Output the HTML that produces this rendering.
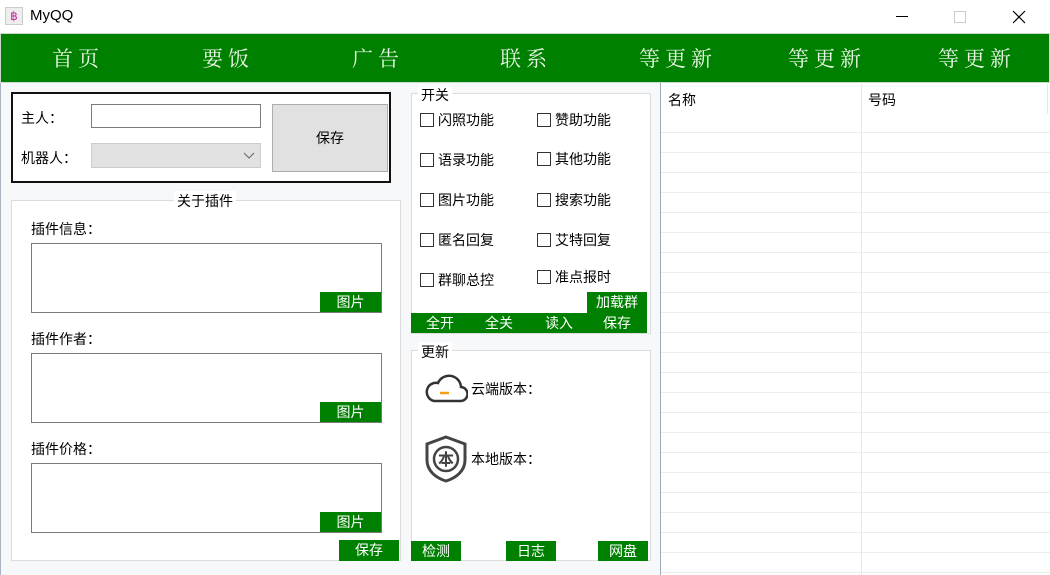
<!DOCTYPE html>
<html><head><meta charset="utf-8"><style>
*{margin:0;padding:0;box-sizing:border-box}
body{width:1050px;height:575px;position:relative;background:#f7f8fa;font-family:"Liberation Sans","Noto Sans CJK SC",sans-serif;font-size:14px;color:#000;overflow:hidden}
.a{position:absolute}
.nav{left:0;top:33px;width:1050px;height:50px;background:#008000;border:1px solid #cfd8cf}
.nav span{position:absolute;top:9px;font-family:"Noto Serif CJK SC",serif;font-size:21px;color:#eef8e8;letter-spacing:5px;transform:translateX(-50%);white-space:nowrap}
.g{background:#008000;color:#fff;font-size:14px;text-align:center;line-height:20px}
.grp{border:1px solid #dcdcdc;background:#fff}
.ta{background:#fff;border:1px solid #7a7a7a}
.cb{position:absolute;font-size:14px;line-height:16px}
.cb i{display:inline-block;width:14px;height:14px;border:1px solid #333;vertical-align:-2px;margin-right:4px;background:#fff}
.lbl{background:#fff;padding:0 3px}
</style></head><body>
<div class="a" style="left:0;top:0;width:1050px;height:33px;background:#fff"></div>
<div class="a" style="left:5px;top:7px;width:18px;height:18px;background:#eee;border:1px solid #ccc;color:#d0209a;font-size:12px;line-height:16px;text-align:center">฿</div>
<div class="a" style="left:30px;top:7px;font-size:15px">MyQQ</div>
<div class="a" style="left:896px;top:16px;width:12px;height:1px;background:#000"></div>
<div class="a" style="left:954px;top:11px;width:12px;height:12px;border:1px solid #ccc"></div>
<svg class="a" style="left:1012px;top:10px" width="14" height="14"><path d="M1 1L13 13M13 1L1 13" stroke="#000" stroke-width="1.2"/></svg>

<div class="a nav">
<span style="left:77px">首页</span><span style="left:227px">要饭</span><span style="left:377px">广告</span><span style="left:525px">联系</span><span style="left:677px">等更新</span><span style="left:826px">等更新</span><span style="left:976px">等更新</span>
</div>

<div class="a" style="left:0;top:83px;width:660px;height:492px;background:#f7f8fa;border-left:1px solid #a9b4c0"></div>

<div class="a" style="left:11px;top:92px;width:380px;height:91px;border:2px solid #111;background:#fff"></div>
<div class="a" style="left:21px;top:108px">主人：</div>
<div class="a" style="left:21px;top:148px">机器人：</div>
<div class="a" style="left:91px;top:104px;width:170px;height:24px;border:1px solid #7a7a7a;background:#fff"></div>
<div class="a" style="left:91px;top:143px;width:170px;height:25px;border:1px solid #ccc;background:#e1e1e1"></div>
<svg class="a" style="left:243px;top:152px" width="12" height="8"><path d="M1 1L6 6L11 1" stroke="#666" fill="none"/></svg>
<div class="a" style="left:272px;top:104px;width:116px;height:68px;border:1px solid #adadad;background:#e1e1e1;text-align:center;line-height:66px">保存</div>

<div class="a grp" style="left:11px;top:200px;width:390px;height:361px"></div>
<div class="a lbl" style="left:174px;top:191px">关于插件</div>
<div class="a" style="left:31px;top:219px">插件信息：</div>
<div class="a ta" style="left:31px;top:243px;width:351px;height:70px"></div>
<div class="a g" style="left:320px;top:292px;width:61px;height:20px">图片</div>
<div class="a" style="left:31px;top:329px">插件作者：</div>
<div class="a ta" style="left:31px;top:353px;width:351px;height:70px"></div>
<div class="a g" style="left:320px;top:402px;width:61px;height:20px">图片</div>
<div class="a" style="left:31px;top:439px">插件价格：</div>
<div class="a ta" style="left:31px;top:463px;width:351px;height:70px"></div>
<div class="a g" style="left:320px;top:512px;width:61px;height:20px">图片</div>
<div class="a g" style="left:339px;top:540px;width:60px;height:21px">保存</div>

<div class="a grp" style="left:411px;top:93px;width:240px;height:241px"></div>
<div class="a lbl" style="left:418px;top:85px">开关</div>
<div class="cb" style="left:420px;top:112px"><i></i>闪照功能</div>
<div class="cb" style="left:537px;top:112px"><i></i>赞助功能</div>
<div class="cb" style="left:420px;top:152px"><i></i>语录功能</div>
<div class="cb" style="left:537px;top:151px"><i></i>其他功能</div>
<div class="cb" style="left:420px;top:192px"><i></i>图片功能</div>
<div class="cb" style="left:537px;top:192px"><i></i>搜索功能</div>
<div class="cb" style="left:420px;top:232px"><i></i>匿名回复</div>
<div class="cb" style="left:537px;top:232px"><i></i>艾特回复</div>
<div class="cb" style="left:420px;top:272px"><i></i>群聊总控</div>
<div class="cb" style="left:537px;top:269px"><i></i>准点报时</div>
<div class="a g" style="left:587px;top:292px;width:60px;height:21px">加载群</div>
<div class="a" style="left:411px;top:313px;width:236px;height:20px;background:#008000"></div>
<div class="a g" style="left:420px;top:313px;width:40px;background:none">全开</div>
<div class="a g" style="left:479px;top:313px;width:40px;background:none">全关</div>
<div class="a g" style="left:539px;top:313px;width:40px;background:none">读入</div>
<div class="a g" style="left:597px;top:313px;width:40px;background:none">保存</div>

<div class="a grp" style="left:411px;top:350px;width:240px;height:211px"></div>
<div class="a lbl" style="left:418px;top:342px">更新</div>
<svg class="a" style="left:424px;top:371px" width="44" height="34"><path d="M10 30H36A7 7 0 0 0 37 16A12 12 0 0 0 14 12A9 9 0 0 0 10 30Z" fill="none" stroke="#333" stroke-width="2.5"/><path d="M16 22H25" stroke="#f5a00f" stroke-width="2.5"/></svg>
<div class="a" style="left:471px;top:379px">云端版本：</div>
<svg class="a" style="left:422px;top:434px" width="48" height="50"><path d="M24 3L43 10V26C43 37 34 44 24 47C14 44 5 37 5 26V10Z" fill="none" stroke="#444" stroke-width="3"/><circle cx="24" cy="25" r="12" fill="none" stroke="#444" stroke-width="2.5"/><text x="24" y="31" text-anchor="middle" font-family="Noto Sans CJK SC" font-size="16" font-weight="bold" fill="#444">本</text></svg>
<div class="a" style="left:471px;top:449px">本地版本：</div>
<div class="a g" style="left:411px;top:541px;width:50px;height:20px">检测</div>
<div class="a g" style="left:506px;top:541px;width:50px;height:20px">日志</div>
<div class="a g" style="left:598px;top:541px;width:50px;height:20px">网盘</div>

<div class="a" style="left:660px;top:83px;width:390px;height:492px;background:#fff;border-left:1px solid #a0aab5"></div>
<div class="a" style="left:668px;top:90px">名称</div>
<div class="a" style="left:868px;top:90px">号码</div>
<div class="a" style="left:861px;top:84px;width:1px;height:491px;background:#e8e8e8"></div>
<div class="a" style="left:1047px;top:84px;width:1px;height:30px;background:#e8e8e8"></div>
<div class="a" style="left:661px;top:113px;width:389px;height:462px;background:repeating-linear-gradient(to bottom,transparent 0,transparent 19px,#ececec 19px,#ececec 20px)"></div>
</body></html>
